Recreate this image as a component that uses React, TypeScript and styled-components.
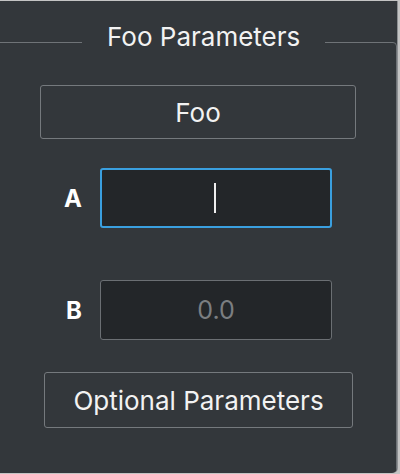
import React from 'react';
import styled, { createGlobalStyle } from 'styled-components';

const GlobalStyle = createGlobalStyle`
    html, body {
        margin: 0;
        padding: 0;
        background: #c4c4c4;
        width: 400px;
        height: 474px;
        overflow: hidden;
    }
    #root {
        padding-top: 1px;
    }
`

const Window = styled.div`
    width: 397px;
    height: 472px;
    background: #33373b;
    border-bottom-right-radius: 5px;
    overflow: hidden;
    font-family: Inter, "Liberation Sans", sans-serif;
    color: #f2f2f2;
    box-shadow: 1px 0 0 #8c8f92;
`

const Group = styled.fieldset`
    margin: 23px 0 0 -12px;
    padding: 0;
    width: 409px;
    min-inline-size: 0;
    height: 470px;
    border: 1px solid #6f7377;
    border-radius: 4px;
    box-sizing: border-box;
`

const Legend = styled.legend`
    margin: 0 0 0 93px;
    padding: 0 25px 10px;
    font-size: 26px;
    line-height: 26px;
    font-weight: 400;
`

const Content = styled.div`
    display: flex;
    flex-direction: column;
    padding-left: 11px;
`

const PushButton = styled.button<{ $left: number; $width: number; $height: number; $top: number }>`
    margin: ${p => p.$top}px 0 0 ${p => p.$left}px;
    width: ${p => p.$width}px;
    height: ${p => p.$height}px;
    background: transparent;
    border: 1px solid #75797d;
    border-radius: 3px;
    color: #f2f2f2;
    font-family: inherit;
    font-size: 26px;
    padding: 0;
`

const Row = styled.div<{ $top: number }>`
    display: grid;
    grid-template-columns: 100px 232px;
    align-items: center;
    margin-top: ${p => p.$top}px;
`

const Label = styled.span`
    justify-self: end;
    margin-right: 18px;
    font-size: 24px;
    font-weight: 700;
    color: #ffffff;
`

const Field = styled.div<{ $focused?: boolean }>`
    height: 60px;
    box-sizing: border-box;
    background: #232629;
    border: ${p => (p.$focused ? '2px solid #3a9fdf' : '1px solid #6b6f73')};
    border-radius: 3px;
    display: flex;
    align-items: center;
    justify-content: center;
    font-size: 25px;
    color: #7b7e81;
`

const Caret = styled.span`
    width: 2px;
    height: 30px;
    background: #eeeeee;
    margin-left: -2px;
`

export default function App() {
    return (
        <>
            <GlobalStyle />
            <Window>
                <Group>
                    <Legend>Foo Parameters</Legend>
                    <Content>
                        <PushButton $top={25} $left={40} $width={316} $height={54}>Foo</PushButton>
                        <Row $top={29}>
                            <Label>A</Label>
                            <Field $focused><Caret /></Field>
                        </Row>
                        <Row $top={52}>
                            <Label>B</Label>
                            <Field>0.0</Field>
                        </Row>
                        <PushButton $top={32} $left={44} $width={309} $height={56}>Optional Parameters</PushButton>
                    </Content>
                </Group>
            </Window>
        </>
    );
}
